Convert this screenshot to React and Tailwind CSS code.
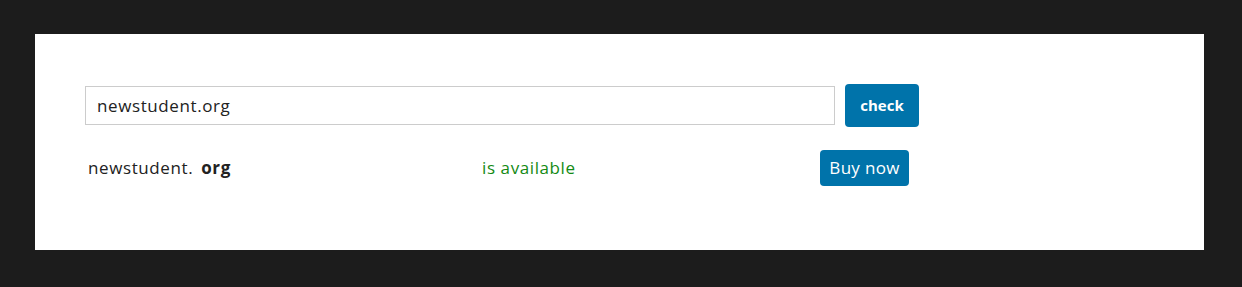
import React, { useState } from "react";

export default function App() {
    const [domain, setDomain] = useState("newstudent.org");

    return (
        <div className="w-[1242px] h-[287px] bg-[#1c1c1c] pt-[34px] pl-[35px]" style={{ fontFamily: '"Open Sans", sans-serif' }}>
            <div className="w-[1169px] h-[216px] bg-white pt-[50px] pl-[50px]">
                <div className="flex items-center">
                    <input
                        type="text"
                        value={domain}
                        onChange={(e) => setDomain(e.target.value)}
                        className="w-[750px] h-[39px] border border-[#cccccc] px-[11px] text-[17px] tracking-[0.6px] text-[#222] outline-none"
                    />
                    <button
                        type="button"
                        className="ml-[10px] w-[74px] h-[43px] rounded-[4px] bg-[#0073aa] text-white text-[15px] font-bold"
                    >
                        check
                    </button>
                </div>

                <div className="flex items-center mt-[23px] h-[36px]">
                    <div className="w-[397px] pl-[3px] text-[17px] tracking-[0.6px] text-[#222]">
                        newstudent.<span className="ml-[8px] font-bold">org</span>
                    </div>
                    <div className="w-[338px] text-[17px] tracking-[0.6px] text-[#138a13]">is available</div>
                    <button
                        type="button"
                        className="w-[89px] h-[36px] rounded-[4px] bg-[#0073aa] text-white text-[17px] tracking-[0.3px]"
                    >
                        Buy now
                    </button>
                </div>
            </div>
        </div>
    );
}
